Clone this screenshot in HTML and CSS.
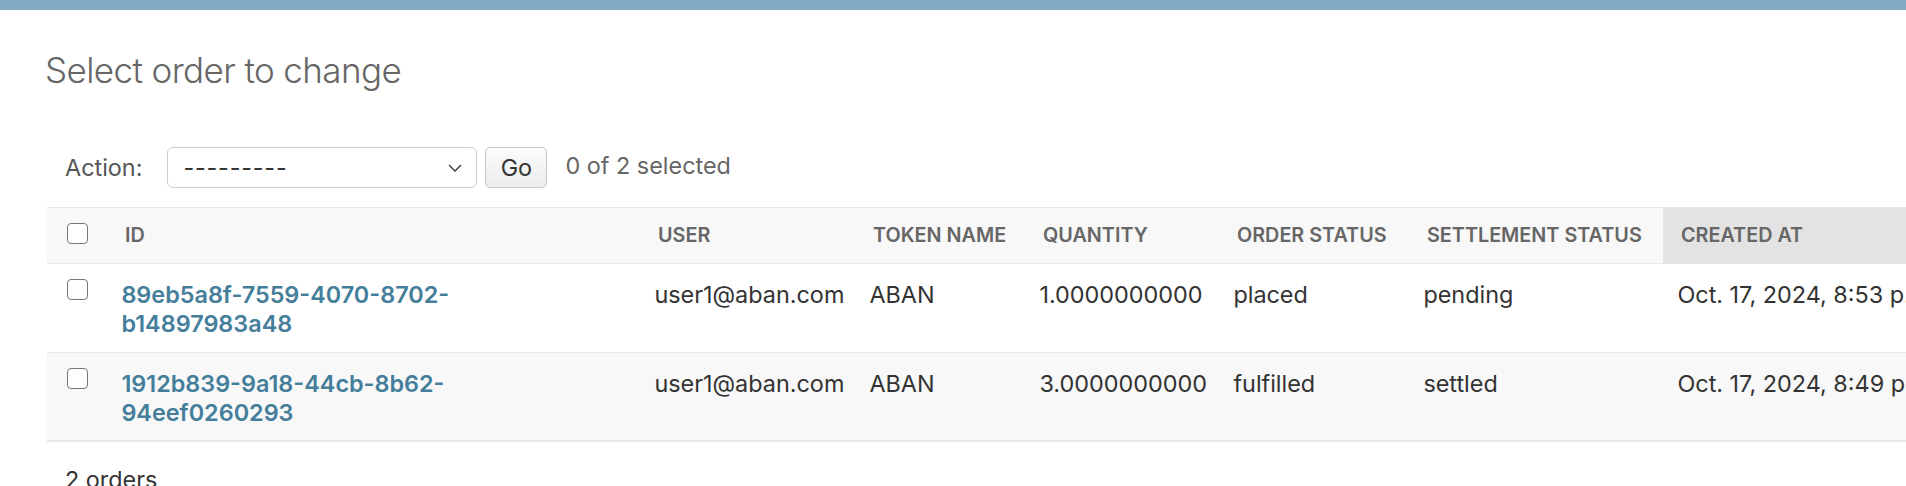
FILE: index.html
```html
<!DOCTYPE html>
<html lang="en">
<head>
<meta charset="utf-8">
<title>Select order to change</title>
<link rel="stylesheet" href="styles.css">
</head>
<body>
<div class="topbar"></div>
<main class="content">
  <h1 class="title">Select order to change</h1>
  <div class="actions">
    <span class="action-label">Action:</span>
    <div class="select">
      <span class="select-value">---------</span>
      <svg class="chevron" width="14" height="8" viewBox="0 0 14 8"><path d="M1 1 L7 7 L13 1" fill="none" stroke="#333" stroke-width="1.3"/></svg>
    </div>
    <button class="go">Go</button>
    <span class="counter">0 of 2 selected</span>
  </div>
  <div class="results">
    <table class="result-list">
      <colgroup>
        <col class="c-check">
        <col class="c-id">
        <col class="c-user">
        <col class="c-token">
        <col class="c-qty">
        <col class="c-order">
        <col class="c-settle">
        <col class="c-created">
      </colgroup>
      <thead>
        <tr>
          <th class="check-col"><span class="cb"></span></th>
          <th><span class="th-text">ID</span></th>
          <th><span class="th-text">User</span></th>
          <th><span class="th-text">Token name</span></th>
          <th><span class="th-text">Quantity</span></th>
          <th><span class="th-text">Order status</span></th>
          <th><span class="th-text">Settlement status</span></th>
          <th class="sorted"><span class="th-text">Created at</span></th>
        </tr>
      </thead>
      <tbody>
        <tr class="row1">
          <td class="check-col"><span class="cb"></span></td>
          <td class="id-cell"><a href="#">89eb5a8f-7559-4070-8702-<br>b14897983a48</a></td>
          <td>user1@aban.com</td>
          <td>ABAN</td>
          <td>1.0000000000</td>
          <td>placed</td>
          <td>pending</td>
          <td>Oct. 17, 2024, 8:53 p.m.</td>
        </tr>
        <tr class="row2">
          <td class="check-col"><span class="cb"></span></td>
          <td class="id-cell"><a href="#">1912b839-9a18-44cb-8b62-<br>94eef0260293</a></td>
          <td>user1@aban.com</td>
          <td>ABAN</td>
          <td>3.0000000000</td>
          <td>fulfilled</td>
          <td>settled</td>
          <td>Oct. 17, 2024, 8:49 p.m.</td>
        </tr>
      </tbody>
    </table>
  </div>
  <p class="paginator">2 orders</p>
</main>
</body>
</html>
```
FILE: styles.css
```css
html, body {
  margin: 0;
  padding: 0;
  background: #fff;
  overflow: hidden;
}
body {
  font-family: Inter, "Helvetica Neue", Arial, sans-serif;
  color: #333;
  width: 1906px;
  height: 486px;
}
.topbar {
  height: 10px;
  background: #83abc6;
}
.content {
  padding-left: 47px;
}
.title {
  margin: 38px 0 0 -2px;
  font-size: 35px;
  line-height: 44px;
  font-weight: 300;
  letter-spacing: -0.6px;
  color: #666;
}
.actions {
  margin-top: 55px;
  padding-left: 18px;
  display: flex;
  align-items: center;
  height: 41px;
  color: #666;
  font-size: 23.4px;
}
.action-label {
  color: #555;
  margin-right: 25px;
}
.select {
  box-sizing: border-box;
  width: 310px;
  height: 41px;
  border: 1px solid #ccc;
  border-radius: 6px;
  display: flex;
  align-items: center;
  justify-content: space-between;
  padding: 0 14px 0 15px;
  color: #333;
}
.select-value {
  letter-spacing: 0.8px;
  font-size: 23.4px;
}
.chevron {
  display: block;
}
.go {
  margin-left: 8px;
  width: 62px;
  height: 41px;
  border: 1px solid #c8c8c8;
  border-radius: 5px;
  background: linear-gradient(#fbfbfb, #ececec);
  font-family: inherit;
  font-size: 23.4px;
  color: #333;
  padding: 0;
}
.counter {
  margin-left: 18px;
  color: #666;
  margin-top: -4px;
}
.results {
  margin-top: 19px;
  width: 1859px;
  overflow: hidden;
}
.result-list {
  border-collapse: collapse;
  table-layout: fixed;
  width: 2100px;
}
.c-check { width: 60px; }
.c-id { width: 533px; }
.c-user { width: 215px; }
.c-token { width: 170px; }
.c-qty { width: 194px; }
.c-order { width: 190px; }
.c-settle { width: 254px; }
.c-created { width: 484px; }
thead th {
  background: #f8f8f8;
  border-top: 1px solid #e8e8e8;
  border-bottom: 1px solid #e8e8e8;
  padding: 0;
  height: 55px;
  text-align: left;
  vertical-align: middle;
  white-space: nowrap;
  font-size: 19.8px;
  font-weight: 600;
  text-transform: uppercase;
  color: #666;
}
thead th.sorted {
  background: #e3e3e3;
}
.th-text {
  display: block;
  padding: 0 18px;
  line-height: 25px;
}
th.check-col, td.check-col {
  text-align: center;
  padding: 0;
}
thead th.check-col .cb {
  margin-top: -8px;
}
.cb {
  display: inline-block;
  width: 19px;
  height: 19px;
  border: 1.5px solid #777;
  border-radius: 4px;
  background: #fff;
  vertical-align: middle;
}
tbody td {
  padding: 16px 14.4px 14px;
  border-bottom: 1px solid #e8e8e8;
  font-size: 23.4px;
  line-height: 29px;
  vertical-align: top;
  color: #333;
}
tbody td.check-col {
  padding-top: 15px;
}
tbody td.check-col .cb {
  vertical-align: top;
}
.row2 td {
  background: #f8f8f8;
  border-bottom: 2px solid #e8e8e8;
  padding-bottom: 13px;
}
.id-cell a {
  color: #447e9b;
  font-weight: 600;
  text-decoration: none;
}
.paginator {
  margin: 0;
  padding-top: 18px;
  padding-left: 18px;
  font-size: 23.4px;
  line-height: 40px;
  color: #333;
}
```
